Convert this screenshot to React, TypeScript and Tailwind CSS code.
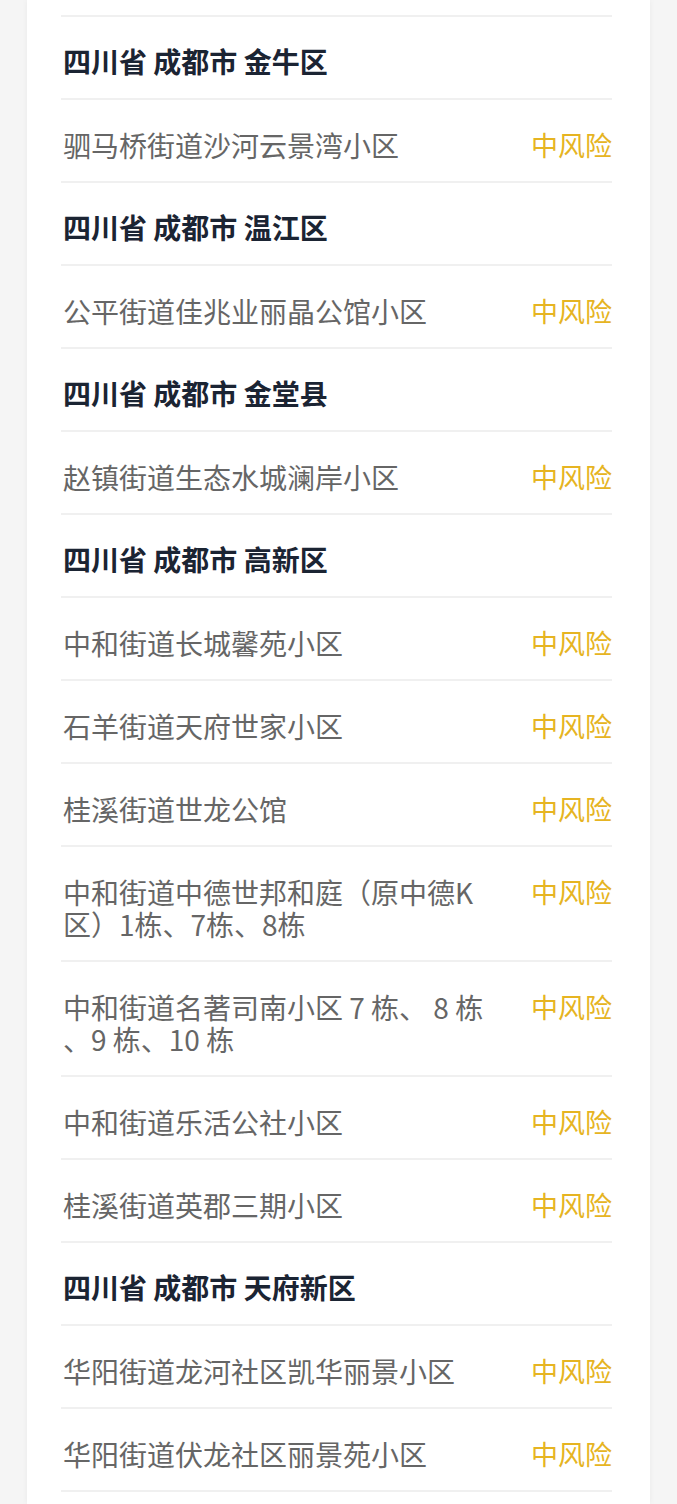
const groups: { region: string; items: string[][] }[] = [
  { region: '四川省 成都市 金牛区', items: [['驷马桥街道沙河云景湾小区']] },
  { region: '四川省 成都市 温江区', items: [['公平街道佳兆业丽晶公馆小区']] },
  { region: '四川省 成都市 金堂县', items: [['赵镇街道生态水城澜岸小区']] },
  {
    region: '四川省 成都市 高新区',
    items: [
      ['中和街道长城馨苑小区'],
      ['石羊街道天府世家小区'],
      ['桂溪街道世龙公馆'],
      ['中和街道中德世邦和庭（原中德K', '区）1栋、7栋、8栋'],
      ['中和街道名著司南小区 7 栋、 8 栋', '、9 栋、10 栋'],
      ['中和街道乐活公社小区'],
      ['桂溪街道英郡三期小区'],
    ],
  },
  {
    region: '四川省 成都市 天府新区',
    items: [['华阳街道龙河社区凯华丽景小区'], ['华阳街道伏龙社区丽景苑小区']],
  },
]

export default function App() {
  return (
    <div
      className="min-h-screen bg-[#f5f5f5] px-[27px]"
      style={{ fontFamily: '"Noto Sans CJK SC", "Noto Sans", sans-serif' }}
    >
      <div className="min-h-screen bg-white pl-[34px] pr-[38px] shadow-[0_0_6px_rgba(0,0,0,0.05)]">
        <div className="h-[17px] border-b-2 border-[#f0f0f0]" />
        {groups.map(g => (
          <div key={g.region}>
            <div className="pl-[2px] pt-[28px] pb-[21px] border-b-2 border-[#f0f0f0] text-[28px] leading-[32px] font-bold text-[#1b2433]">
              {g.region}
            </div>
            {g.items.map(lines => (
              <div
                key={lines.join('')}
                className="flex justify-between gap-4 pl-[2px] pt-[29px] pb-[20px] border-b-2 border-[#f0f0f0]"
              >
                <div className="text-[28px] leading-[32px] text-[#666666]">
                  {lines.map(l => (
                    <div key={l} className="whitespace-pre">{l}</div>
                  ))}
                </div>
                <div className="shrink-0 text-[27px] leading-[32px] text-[#e6b422]">中风险</div>
              </div>
            ))}
          </div>
        ))}
      </div>
    </div>
  )
}
